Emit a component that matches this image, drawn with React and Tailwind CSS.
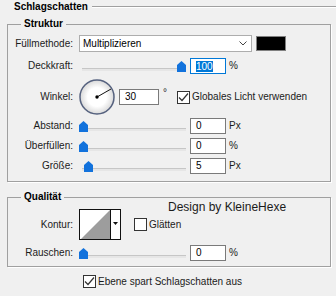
import React from 'react';

function Check({ checked }) {
  return (
    <div className="w-[13px] h-[13px] shrink-0 border border-[#333] bg-white flex items-center justify-center">
      {checked && (
        <svg width="11" height="11" viewBox="0 0 11 11">
          <polyline points="1,5.5 4,8.5 10,1.5" fill="none" stroke="#333" strokeWidth="1.2" />
        </svg>
      )}
    </div>
  );
}

function Slider({ pos }) {
  return (
    <div className="relative w-[107px] h-[16px] shrink-0">
      <div className="absolute left-[3px] right-0 top-[10px] h-[3px] bg-[#e6e6e6] border-t border-[#c6c6c6]" />
      <svg className="absolute top-[3px]" style={{ left: pos }} width="9" height="11" viewBox="0 0 9 11">
        <path d="M4.5 0 L9 4 L9 11 L0 11 L0 4 Z" fill="#1272dc" />
      </svg>
    </div>
  );
}

function Field({ value, focused, w = 'w-[36px]' }) {
  return (
    <div
      className={`${w} h-[16px] shrink-0 bg-white border flex items-center pl-[5px] text-black ${
        focused ? 'border-[#0078d7] pl-[4px]' : 'border-[#7a7a7a]'
      }`}
    >
      {focused ? <span className="bg-[#0078d7] text-white leading-[11px]">{value}</span> : value}
    </div>
  );
}

function Label({ children }) {
  return <div className="w-[65px] shrink-0 text-right mr-[6px]">{children}</div>;
}

function SliderRow({ label, pos, value, unit, mt, focused }) {
  return (
    <div className={`flex items-center h-[16px] ${mt}`}>
      <Label>{label}</Label>
      <Slider pos={pos} />
      <div className="ml-[4px]">
        <Field value={value} focused={focused} />
      </div>
      <div className="ml-[3px]">{unit}</div>
    </div>
  );
}

export default function App() {
  return (
    <div className="w-[336px] h-[296px] bg-[#f0f0f0] text-[10px] leading-[14px] text-[#1b1b1b] font-['Liberation_Sans',Arial,sans-serif] overflow-hidden">
      {/* Title */}
      <div className="flex items-center h-[14px] pl-[14px]">
        <span className="font-bold text-black">Schlagschatten</span>
        <div className="ml-[4px] flex-1 h-[2px] border-t border-b border-t-[#a0a0a0] border-b-white" />
      </div>

      {/* Struktur */}
      <fieldset className="mt-[3px] ml-[7px] mr-[5px] border border-[#a0a0a0] pb-[7px] shadow-[1px_1px_0_#fff]">
        <legend className="ml-[13px] px-[3px] font-bold text-black leading-[14px]">Struktur</legend>

        <div className="flex items-center h-[17px] mt-[4px]">
          <Label>Füllmethode:</Label>
          <div className="w-[173px] h-[17px] bg-white border border-[#adadad] flex items-center justify-between pl-[3px] pr-[4px] text-black">
            <span>Multiplizieren</span>
            <svg width="8" height="5" viewBox="0 0 8 5">
              <polyline points="0.5,0.5 4,4 7.5,0.5" fill="none" stroke="#444" strokeWidth="1" />
            </svg>
          </div>
          <div className="ml-[4px] w-[30px] h-[15px] bg-black border border-[#808080]" />
        </div>

        <SliderRow label="Deckkraft:" pos={98} value="100" unit="%" mt="mt-[6px]" focused />

        <div className="flex items-center h-[36px] mt-[5px]">
          <Label>Winkel:</Label>
          <svg width="36" height="36" viewBox="0 0 36 36" className="shrink-0">
            <defs>
              <radialGradient id="dial" cx="50%" cy="50%" r="50%">
                <stop offset="55%" stopColor="#ffffff" />
                <stop offset="100%" stopColor="#d9d9d9" />
              </radialGradient>
            </defs>
            <circle cx="18" cy="18" r="17" fill="url(#dial)" stroke="#56627f" strokeWidth="1.5" />
            <line x1="18" y1="18" x2="32" y2="10" stroke="#111" strokeWidth="1" />
            <circle cx="18" cy="18" r="1.7" fill="#000" />
          </svg>
          <div className="ml-[4px]">
            <Field value="30" w="w-[40px]" />
          </div>
          <div className="w-[18px] pl-[4px] self-start mt-[9px] leading-[10px]">°</div>
          <Check checked />
          <span className="ml-[2px]">Globales Licht verwenden</span>
        </div>

        <SliderRow label="Abstand:" pos={0} value="0" unit="Px" mt="mt-[3px]" />
        <SliderRow label="Überfüllen:" pos={0} value="0" unit="%" mt="mt-[4px]" />
        <SliderRow label="Größe:" pos={5} value="5" unit="Px" mt="mt-[4px]" />
      </fieldset>

      {/* Qualität */}
      <fieldset className="mt-[8px] ml-[7px] mr-[5px] border border-[#a0a0a0] pb-[5px] shadow-[1px_1px_0_#fff]">
        <legend className="ml-[13px] px-[3px] font-bold text-black leading-[14px]">Qualität</legend>

        <div className="flex items-start h-[31px] mt-[5px]">
          <div className="self-center">
            <Label>Kontur:</Label>
          </div>
          <svg width="42" height="31" viewBox="0 0 42 31" className="shrink-0">
            <rect x="0.5" y="0.5" width="41" height="30" fill="#fff" stroke="#111" />
            <polygon points="2,30 31,1 31,30" fill="#9d9d9d" />
            <line x1="31.5" y1="0.5" x2="31.5" y2="30.5" stroke="#111" />
            <polygon points="34,13 39,13 36.5,16" fill="#111" />
          </svg>
          <div className="-mt-[9px] ml-[13px] flex flex-col">
            <div className="pl-[34px] text-[12px] leading-[14px] text-[#1b1b1b] whitespace-nowrap">Design by KleineHexe</div>
            <div className="flex items-center mt-[4px] h-[13px]">
              <Check />
              <span className="ml-[2px]">Glätten</span>
            </div>
          </div>
        </div>

        <SliderRow label="Rauschen:" pos={0} value="0" unit="%" mt="mt-[5px]" />
      </fieldset>

      <div className="flex items-center h-[13px] mt-[8px] pl-[83px]">
        <Check checked />
        <span className="ml-[2px]">Ebene spart Schlagschatten aus</span>
      </div>
    </div>
  );
}
